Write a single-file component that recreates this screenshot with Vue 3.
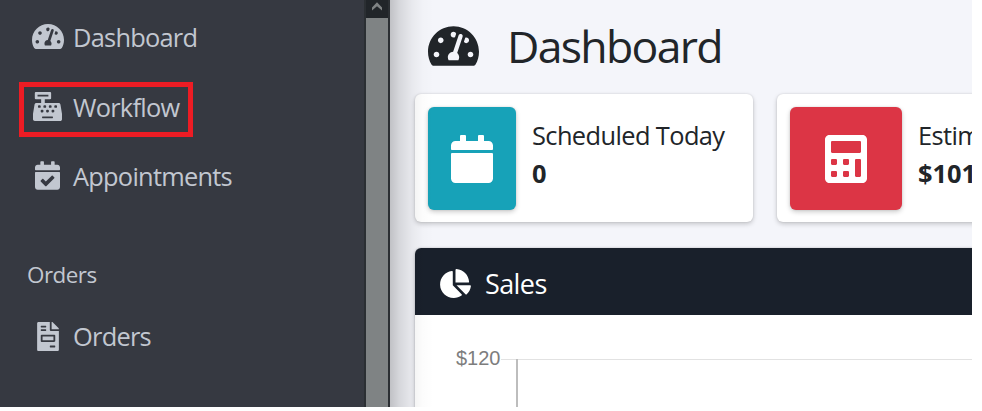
<script setup>
import { ref } from "vue";

const icons = {
    gauge: {
        box: "0 32 576 448",
        path: "M288 32C128.94 32 0 160.94 0 320c0 52.8 14.25 102.26 39.06 144.8 5.61 9.62 16.3 15.2 27.44 15.2h443c11.14 0 21.83-5.58 27.44-15.2C561.75 422.26 576 372.8 576 320c0-159.06-128.94-288-288-288zm0 64c14.71 0 26.58 10.13 30.32 23.65-1.11 2.26-2.64 4.23-3.45 6.67l-9.22 27.67c-5.13 3.49-10.97 6.01-17.64 6.01-17.67 0-32-14.33-32-32S270.33 96 288 96zM96 384c-17.67 0-32-14.33-32-32s14.33-32 32-32 32 14.33 32 32-14.33 32-32 32zm48-160c-17.67 0-32-14.33-32-32s14.33-32 32-32 32 14.33 32 32-14.33 32-32 32zm246.77-72.41l-61.33 184C343.13 347.33 352 364.54 352 384c0 11.72-3.38 22.55-8.88 32H232.88c-5.5-9.45-8.88-20.28-8.88-32 0-33.94 26.5-61.43 59.9-63.59l61.34-184.01c4.17-12.56 17.73-19.45 30.36-15.17 12.57 4.19 19.35 17.79 15.17 30.36zm14.66 57.2l15.52-46.55c3.47-1.29 7.13-2.23 11.05-2.23 17.67 0 32 14.33 32 32s-14.33 32-32 32c-11.38-.01-20.89-6.28-26.57-15.22zM480 384c-17.67 0-32-14.33-32-32s14.33-32 32-32 32 14.33 32 32-14.33 32-32 32z",
    },
    register: {
        box: "0 0 512 512",
        path: "M511.1 378.8l-26.7-160c-2.6-15.4-15.9-26.7-31.6-26.7H208v-64h96c8.8 0 16-7.2 16-16V16c0-8.8-7.2-16-16-16H48c-8.8 0-16 7.2-16 16v96c0 8.8 7.2 16 16 16h96v64H59.1c-15.6 0-29 11.3-31.6 26.7L.8 378.7c-.6 3.5-.9 7-.9 10.5V480c0 17.7 14.3 32 32 32h448c17.7 0 32-14.3 32-32v-90.7c.1-3.5-.2-7-.8-10.5zM280 248c0-8.8 7.2-16 16-16h16c8.8 0 16 7.2 16 16v16c0 8.8-7.2 16-16 16h-16c-8.8 0-16-7.2-16-16v-16zm-32 64h16c8.8 0 16 7.2 16 16v16c0 8.8-7.2 16-16 16h-16c-8.8 0-16-7.2-16-16v-16c0-8.8 7.2-16 16-16zm-32-80c8.8 0 16 7.2 16 16v16c0 8.8-7.2 16-16 16h-16c-8.8 0-16-7.2-16-16v-16c0-8.8 7.2-16 16-16h16zM80 80V48h192v32H80zm40 200h-16c-8.8 0-16-7.2-16-16v-16c0-8.8 7.2-16 16-16h16c8.8 0 16 7.2 16 16v16c0 8.8-7.2 16-16 16zm16 64v-16c0-8.8 7.2-16 16-16h16c8.8 0 16 7.2 16 16v16c0 8.8-7.2 16-16 16h-16c-8.8 0-16-7.2-16-16zm216 112c0 4.4-3.6 8-8 8H168c-4.4 0-8-3.6-8-8v-16c0-4.4 3.6-8 8-8h176c4.4 0 8 3.6 8 8v16zm24-112c0 8.8-7.2 16-16 16h-16c-8.8 0-16-7.2-16-16v-16c0-8.8 7.2-16 16-16h16c8.8 0 16 7.2 16 16v16zm48-80c0 8.8-7.2 16-16 16h-16c-8.8 0-16-7.2-16-16v-16c0-8.8 7.2-16 16-16h16c8.8 0 16 7.2 16 16v16z",
    },
    check: {
        box: "0 0 448 512",
        path: "M436 160H12c-6.627 0-12-5.373-12-12v-36c0-26.51 21.49-48 48-48h48V12c0-6.627 5.373-12 12-12h40c6.627 0 12 5.373 12 12v52h128V12c0-6.627 5.373-12 12-12h40c6.627 0 12 5.373 12 12v52h48c26.51 0 48 21.49 48 48v36c0 6.627-5.373 12-12 12zM12 192h424c6.627 0 12 5.373 12 12v260c0 26.51-21.49 48-48 48H48c-26.51 0-48-21.49-48-48V204c0-6.627 5.373-12 12-12zm333.296 95.947l-28.169-28.398c-4.667-4.705-12.265-4.736-16.97-.068L194.12 364.665l-45.98-46.352c-4.667-4.705-12.266-4.736-16.971-.068l-28.397 28.17c-4.705 4.667-4.736 12.265-.068 16.97l82.601 83.269c4.667 4.705 12.265 4.736 16.97.068l142.953-141.805c4.705-4.667 4.736-12.265.068-16.97z",
    },
    invoice: {
        box: "0 0 384 512",
        path: "M288 256H96v64h192v-64zm89-151L279.1 7c-4.5-4.5-10.6-7-17-7H256v128h128v-6.1c0-6.3-2.5-12.4-7-16.9zm-153 31V0H24C10.7 0 0 10.7 0 24v464c0 13.3 10.7 24 24 24h336c13.3 0 24-10.7 24-24V160H248c-13.2 0-24-10.8-24-24zM64 72c0-4.42 3.58-8 8-8h80c4.42 0 8 3.58 8 8v16c0 4.42-3.58 8-8 8H72c-4.42 0-8-3.58-8-8V72zm0 64c0-4.42 3.58-8 8-8h80c4.42 0 8 3.58 8 8v16c0 4.42-3.58 8-8 8H72c-4.42 0-8-3.58-8-8v-16zm256 304c0 4.42-3.58 8-8 8h-80c-4.42 0-8-3.58-8-8v-16c0-4.42 3.58-8 8-8h80c4.42 0 8 3.58 8 8v16zm0-200v96c0 8.84-7.16 16-16 16H80c-8.84 0-16-7.16-16-16v-96c0-8.84 7.16-16 16-16h224c8.84 0 16 7.16 16 16z",
    },
    calendar: {
        box: "0 0 448 512",
        path: "M12 192h424c6.6 0 12 5.4 12 12v260c0 26.5-21.5 48-48 48H48c-26.5 0-48-21.5-48-48V204c0-6.6 5.4-12 12-12zm436-44v-36c0-26.5-21.5-48-48-48h-48V12c0-6.6-5.4-12-12-12h-40c-6.6 0-12 5.4-12 12v52H160V12c0-6.6-5.4-12-12-12h-40c-6.6 0-12 5.4-12 12v52H48C21.5 64 0 85.5 0 112v36c0 6.6 5.4 12 12 12h424c6.6 0 12-5.4 12-12z",
    },
    calculator: {
        box: "0 0 448 512",
        path: "M400 0H48C22.4 0 0 22.4 0 48v416c0 25.6 22.4 48 48 48h352c25.6 0 48-22.4 48-48V48c0-25.6-22.4-48-48-48zM128 435.2c0 6.4-6.4 12.8-12.8 12.8H76.8c-6.4 0-12.8-6.4-12.8-12.8v-38.4c0-6.4 6.4-12.8 12.8-12.8h38.4c6.4 0 12.8 6.4 12.8 12.8v38.4zm0-128c0 6.4-6.4 12.8-12.8 12.8H76.8c-6.4 0-12.8-6.4-12.8-12.8v-38.4c0-6.4 6.4-12.8 12.8-12.8h38.4c6.4 0 12.8 6.4 12.8 12.8v38.4zm128 128c0 6.4-6.4 12.8-12.8 12.8h-38.4c-6.4 0-12.8-6.4-12.8-12.8v-38.4c0-6.4 6.4-12.8 12.8-12.8h38.4c6.4 0 12.8 6.4 12.8 12.8v38.4zm0-128c0 6.4-6.4 12.8-12.8 12.8h-38.4c-6.4 0-12.8-6.4-12.8-12.8v-38.4c0-6.4 6.4-12.8 12.8-12.8h38.4c6.4 0 12.8 6.4 12.8 12.8v38.4zm128 128c0 6.4-6.4 12.8-12.8 12.8h-38.4c-6.4 0-12.8-6.4-12.8-12.8V268.8c0-6.4 6.4-12.8 12.8-12.8h38.4c6.4 0 12.8 6.4 12.8 12.8v166.4zm0-256c0 6.4-6.4 12.8-12.8 12.8H76.8c-6.4 0-12.8-6.4-12.8-12.8V76.8C64 70.4 70.4 64 76.8 64h294.4c6.4 0 12.8 6.4 12.8 12.8v102.4z",
    },
    pie: {
        box: "0 0 544 512",
        path: "M527.79 288H290.5l158.03 158.03c6.04 6.04 15.98 6.53 22.19.68 38.7-36.46 65.32-85.61 73.13-140.86 1.34-9.46-6.51-17.85-16.06-17.85zm-15.83-64.8C503.72 103.74 408.26 8.28 288.8.04 279.68-.59 272 7.1 272 16.24V240h223.77c9.14 0 16.82-7.68 16.19-16.8zM224 288V50.71c0-9.55-8.39-17.4-17.84-16.06C86.99 51.49-4.1 155.6.14 280.37 4.5 408.51 114.83 513.59 243.03 511.98c50.4-.63 96.97-16.87 135.26-44.03 7.9-5.6 8.42-17.23 1.57-24.08L224 288z",
    },
};

const active = ref("Workflow");
const mainLinks = [
    { text: "Dashboard", icon: "gauge" },
    { text: "Workflow", icon: "register" },
    { text: "Appointments", icon: "check" },
];
const orderLinks = [{ text: "Orders", icon: "invoice" }];
const cards = [
    { label: "Scheduled Today", value: "0", icon: "calendar", color: "info" },
    { label: "Estim", value: "$101", icon: "calculator", color: "danger" },
];
</script>

<template>
    <div class="wrapper">
        <aside>
            <nav>
                <a
                    v-for="link in mainLinks"
                    :key="link.text"
                    :class="['link', link.icon, { active: link.text === active }]"
                    @click="active = link.text"
                >
                    <span class="linkIcon">
                        <svg :class="link.icon" :viewBox="icons[link.icon].box">
                            <path :d="icons[link.icon].path" />
                        </svg>
                    </span>
                    <span class="linkText">{{ link.text }}</span>
                </a>
                <div class="header">Orders</div>
                <a
                    v-for="link in orderLinks"
                    :key="link.text"
                    :class="['link', link.icon]"
                    @click="active = link.text"
                >
                    <span class="linkIcon">
                        <svg :class="link.icon" :viewBox="icons[link.icon].box">
                            <path :d="icons[link.icon].path" />
                        </svg>
                    </span>
                    <span class="linkText">{{ link.text }}</span>
                </a>
            </nav>
            <div class="scrollbar">
                <div class="arrow">
                    <svg viewBox="0 0 22 18">
                        <path d="M6 7.4L11 2.2L16 7.4V10.4L11 6.2L6 10.4Z" />
                    </svg>
                </div>
                <div class="thumb"></div>
            </div>
        </aside>

        <main>
            <h1>
                <svg :viewBox="icons.gauge.box"><path :d="icons.gauge.path" /></svg>
                <span>Dashboard</span>
            </h1>
            <div class="cards">
                <div v-for="card in cards" :key="card.label" :class="['card', card.color]">
                    <div class="cardIcon">
                        <svg :viewBox="icons[card.icon].box">
                            <path :d="icons[card.icon].path" />
                        </svg>
                    </div>
                    <div class="cardText">
                        <span class="label">{{ card.label }}</span>
                        <span class="value">{{ card.value }}</span>
                    </div>
                </div>
            </div>
            <section>
                <h2>
                    <svg :viewBox="icons.pie.box"><path :d="icons.pie.path" /></svg>
                    <span>Sales</span>
                </h2>
                <svg class="chart" width="700" height="92">
                    <text x="41" y="50">$120</text>
                    <rect class="grid" x="86" y="44" width="614" height="1" />
                    <rect class="axis" x="101" y="44" width="2" height="48" />
                </svg>
            </section>
        </main>
    </div>
</template>

<style>
body {
    margin: 0;
    background-color: white;
}
</style>

<style scoped>
* {
    box-sizing: border-box;
}

.wrapper {
    width: 972px;
    height: 407px;
    display: flex;
    overflow: hidden;
    font-family: "Open Sans", "Noto Sans", sans-serif;
    color: #212529;
}

svg {
    display: block;
    flex: none;
    fill: currentColor;
}

aside {
    width: 390px;
    flex: none;
    display: flex;
    background-color: #363941;
    color: #c2c7d0;
}

nav {
    flex: 1;
    padding: 3px 0 0 19px;
}

.link {
    position: relative;
    width: 174px;
    height: 70px;
    display: flex;
    align-items: center;
    white-space: nowrap;
    cursor: pointer;
}

.link.check {
    height: 68px;
}

.link.active::after {
    content: "";
    box-sizing: border-box;
    position: absolute;
    top: 9px;
    left: 0;
    width: 174px;
    height: 55px;
    border: 5px solid #ed1c24;
}

.linkIcon {
    width: 54px;
    padding-left: 3px;
    display: flex;
    justify-content: center;
    flex: none;
}

svg.gauge {
    width: 32px;
    height: 25px;
    margin-bottom: 3px;
}

svg.register {
    width: 29px;
    height: 29px;
    margin-bottom: 3px;
}

svg.check {
    width: 25px;
    height: 29px;
    margin-bottom: 3px;
}

svg.invoice {
    width: 22px;
    height: 29px;
    margin-bottom: 1px;
}

.linkText {
    font-size: 25.4px;
    line-height: 36px;
    letter-spacing: -0.75px;
    padding-bottom: 2px;
}

.header {
    height: 91px;
    padding: 48px 0 0 8px;
    font-size: 22.4px;
    line-height: 32px;
    letter-spacing: -0.5px;
}

.scrollbar {
    width: 26px;
    display: flex;
    flex-direction: column;
    background-color: #7f8384;
    border: solid #2b2f33;
    border-width: 0 2px;
}

.arrow {
    height: 18px;
    background-color: #212529;
    color: #7f8384;
}

main {
    position: relative;
    flex: 1;
    min-width: 0;
    padding-left: 25px;
    background-color: #f4f5fa;
    overflow: hidden;
}

/* shadow that the sidebar casts over the content */
main::after {
    content: "";
    position: absolute;
    top: 0;
    left: 0;
    width: 44px;
    height: 100%;
    background: linear-gradient(
        to right,
        rgba(0, 0, 0, 0.21),
        rgba(0, 0, 0, 0.12) 22%,
        rgba(0, 0, 0, 0.05) 50%,
        rgba(0, 0, 0, 0.013) 75%,
        transparent
    );
}

h1 {
    height: 94px;
    margin: 0;
    padding: 0 0 2px 13px;
    display: flex;
    align-items: center;
    gap: 28px;
    font-size: 44.6px;
    font-weight: 400;
    letter-spacing: -1.7px;
}

h1 span {
    padding-bottom: 2px;
}

h1 svg {
    width: 51px;
    height: 40px;
}

.cards {
    display: flex;
    gap: 24px;
    margin-bottom: 26px;
}

.card {
    width: 338px;
    height: 128px;
    flex: none;
    display: flex;
    padding: 13px;
    background-color: white;
    border-radius: 6px;
    box-shadow: 0 0 2px rgba(0, 0, 0, 0.13), 0 2px 5px rgba(0, 0, 0, 0.2);
    white-space: nowrap;
}

.cardIcon {
    width: 88px;
    height: 103px;
    flex: none;
    display: flex;
    align-items: center;
    justify-content: center;
    border-radius: 6px;
    background-color: #17a2b8;
    color: white;
    box-shadow: 0 0 2px rgba(0, 0, 0, 0.13), 0 2px 5px rgba(0, 0, 0, 0.2);
}

.danger .cardIcon {
    width: 112px;
    background-color: #dc3545;
}

.cardIcon svg {
    width: 42px;
    height: 48px;
}

.cardText {
    display: flex;
    flex-direction: column;
    padding: 9px 0 0 16px;
    font-size: 25.4px;
    line-height: 38px;
}

.label {
    letter-spacing: -0.6px;
}

.value {
    font-weight: 700;
}

section {
    width: 700px;
    height: 170px;
    border-radius: 6px;
    background-color: white;
    box-shadow: 0 0 2px rgba(0, 0, 0, 0.2), 0 2px 5px rgba(0, 0, 0, 0.2);
    overflow: hidden;
}

h2 {
    height: 67px;
    margin: 0;
    padding: 4px 0 0 25px;
    display: flex;
    align-items: center;
    gap: 14px;
    background-color: #19202b;
    color: white;
    font-size: 27px;
    font-weight: 400;
    letter-spacing: -0.6px;
}

h2 svg {
    width: 31px;
    height: 29px;
}

.chart text {
    font-family: "Liberation Sans", sans-serif;
    font-size: 20px;
    fill: #7d7d7d;
}

.grid {
    fill: #e2e2e2;
}

.axis {
    fill: #bdbdbd;
}
</style>
